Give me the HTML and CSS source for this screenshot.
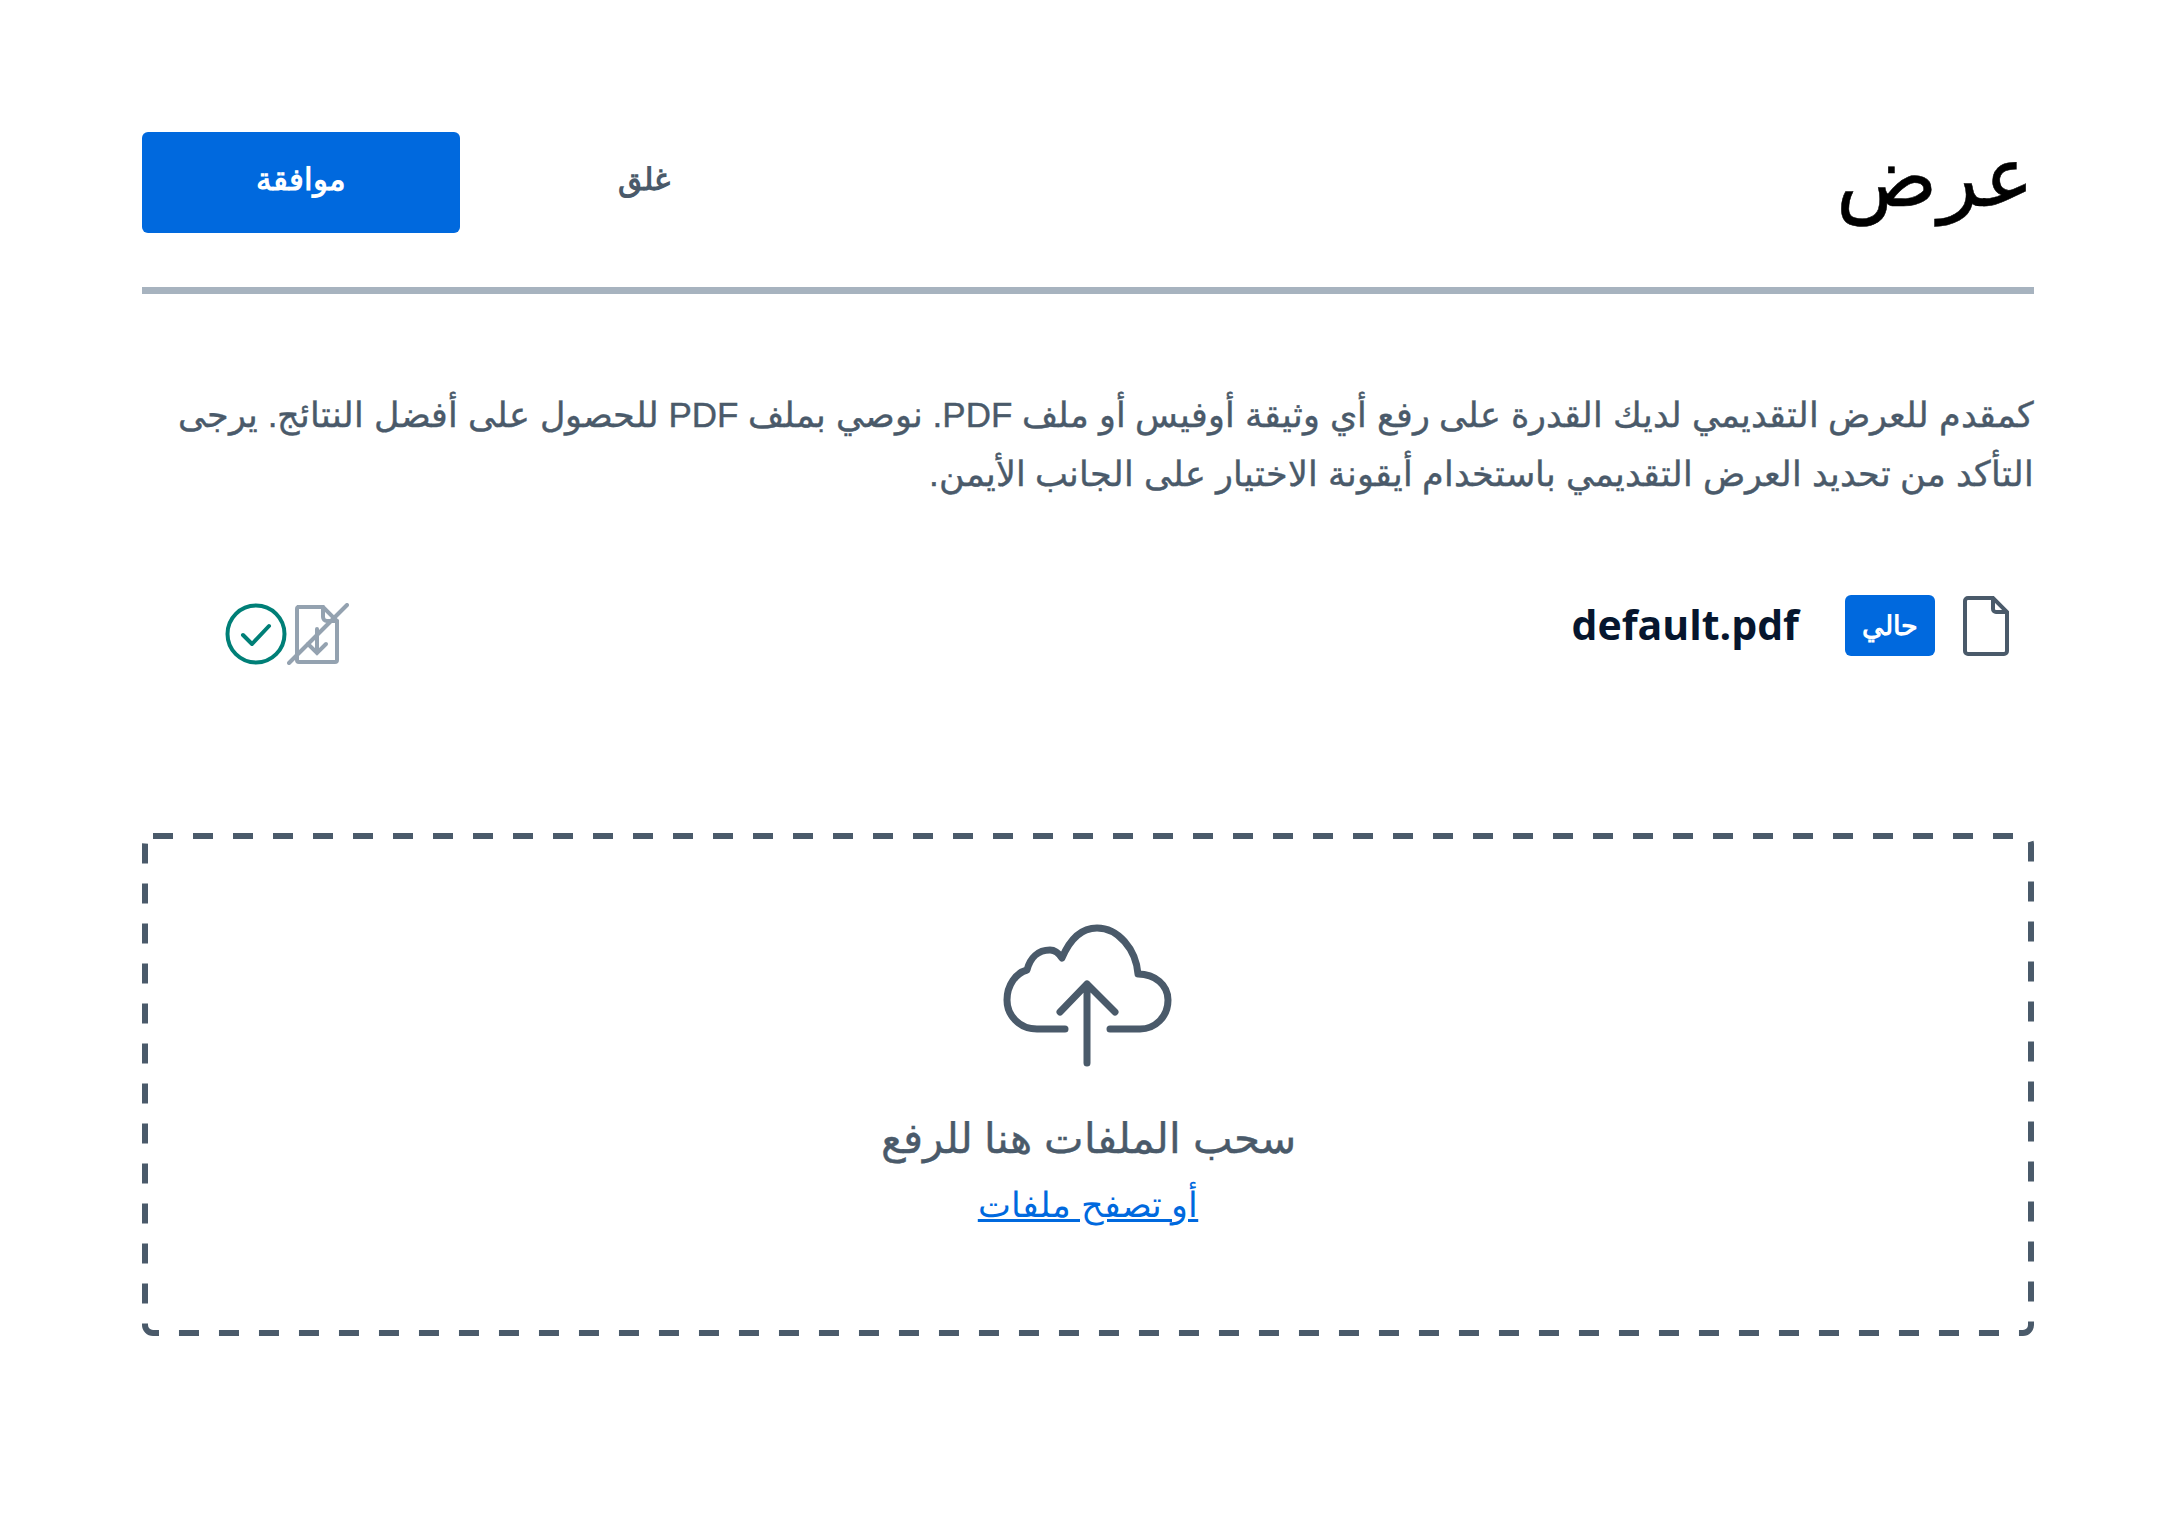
FILE: index.html
```html
<!DOCTYPE html>
<html lang="ar" dir="rtl">
<head>
    <meta charset="UTF-8">
    <title>عرض</title>
    <link rel="stylesheet" href="styles.css">
</head>
<body>
    <main class="modal">
        <header class="modal-header">
            <h1 class="modal-title">عرض</h1>
            <div class="modal-actions">
                <button class="close-button">غلق</button>
                <button class="confirm-button">موافقة</button>
            </div>
        </header>

        <p class="intro">كمقدم للعرض التقديمي لديك القدرة على رفع أي وثيقة أوفيس أو ملف PDF. نوصي بملف PDF للحصول على أفضل النتائج. يرجى التأكد من تحديد العرض التقديمي باستخدام أيقونة الاختيار على الجانب الأيمن.</p>

        <div class="file-row">
            <div class="file-info">
                <svg class="file-icon" viewBox="0 0 48 60">
                    <path d="M4 5a3 3 0 0 1 3-3h25l14 14v39a3 3 0 0 1-3 3H7a3 3 0 0 1-3-3Z"></path>
                    <path d="M32 2v11a3 3 0 0 0 3 3h11"></path>
                </svg>
                <span class="current-badge">حالي</span>
                <span class="file-name" dir="ltr">default.pdf</span>
            </div>
            <div class="file-actions">
                <svg class="download-icon" viewBox="0 0 62 62">
                    <path d="M10 4h26l14 14v39a2 2 0 0 1-2 2H12a2 2 0 0 1-2-2V6a2 2 0 0 1 2-2Z"></path>
                    <path d="M36 4v10a4 4 0 0 0 4 4h10"></path>
                    <path d="M30 26v24M39 41l-9 9-9-9"></path>
                    <path d="M2 60 60 2"></path>
                </svg>
                <svg class="check-icon" viewBox="0 0 62 62">
                    <circle cx="31" cy="31" r="28.500"></circle>
                    <path d="M18 32l9 9 17-18"></path>
                </svg>
            </div>
        </div>

        <section class="dropzone">
            <svg class="dropzone-border">
                <rect x="3" y="3" rx="8" ry="8"></rect>
            </svg>
            <svg class="upload-icon" viewBox="0 0 176 146">
                <path d="M65 106H37C19 106 7 92 7 77C7 62 16 50 27 47C30 35 38 27 50 27C54 27 58 29 62 35C70 16 82 5 97 5C118 5 136 26 138 51C155 51 168 62 168 77C168 94 155 106 140 106H110"></path>
                <path d="M87 140V61M60 89l27-28 28 28"></path>
            </svg>
            <div class="dropzone-text">سحب الملفات هنا للرفع</div>
            <a class="browse-link" href="#">أو تصفح ملفات</a>
        </section>
    </main>
</body>
</html>
```

FILE: styles.css
```css
* {
    margin: 0;
    padding: 0;
    box-sizing: border-box;
}

body {
    background: white;
    color: #4a5a6a;
    font-family: "Liberation Sans", "Noto Sans", sans-serif;
}

.modal {
    padding: 132px 143px 0 142px;
}

.modal-header {
    display: flex;
    align-items: center;
    justify-content: space-between;
    height: 162px;
    padding-bottom: 54px;
    border-bottom: 7px solid #a7b3bf;
}

.modal-title {
    font-size: 84px;
    line-height: 84px;
    padding-bottom: 12px;
    font-weight: normal;
    color: black;
    -webkit-text-stroke: 0.5px black;
}

.modal-actions {
    display: flex;
    align-items: center;
    gap: 158px;
}

.close-button {
    border: none;
    background: none;
    color: #4a5a6a;
    padding-bottom: 6px;
    font: bold 31px "Liberation Sans", "Noto Sans", sans-serif;
}

.confirm-button {
    width: 318px;
    height: 101px;
    padding-bottom: 6px;
    border: none;
    border-radius: 6px;
    background: #0069de;
    color: white;
    font: bold 31px "Liberation Sans", "Noto Sans", sans-serif;
}

.intro {
    margin-top: 91px;
    font-size: 35px;
    line-height: 59px;
    -webkit-text-stroke: 0.4px #4a5a6a;
}

.file-row {
    display: flex;
    align-items: flex-start;
    justify-content: space-between;
    margin-top: 92px;
    padding: 0 25px 0 0;
}

.file-info {
    display: flex;
    align-items: center;
    gap: 26px;
}

.file-icon {
    width: 48px;
    height: 60px;
    fill: none;
    stroke: #4a5a6a;
    stroke-width: 4;
}

.current-badge {
    width: 90px;
    height: 61px;
    margin-left: 20px;
    display: flex;
    align-items: center;
    justify-content: center;
    border-radius: 6px;
    background: #0069de;
    color: white;
    font-size: 27px;
    font-weight: bold;
}

.file-name {
    margin-top: -4px;
    font-family: "Open Sans", sans-serif;
    font-size: 41px;
    font-weight: bold;
    color: #06162e;
}

.file-actions {
    display: flex;
    align-items: center;
    gap: 0;
    margin-top: 8px;
    margin-left: 83px;
}

.download-icon {
    width: 62px;
    height: 62px;
    fill: none;
    stroke: #94a2b0;
    stroke-width: 4;
    stroke-linecap: round;
}

.check-icon {
    width: 62px;
    height: 62px;
    fill: none;
    stroke: #007f77;
    stroke-width: 4;
    stroke-linecap: round;
    stroke-linejoin: round;
}

.dropzone {
    position: relative;
    height: 503px;
    margin-top: 168px;
    padding-top: 90px;
    display: flex;
    flex-direction: column;
    align-items: center;
}

.dropzone-border {
    position: absolute;
    inset: 0;
    width: 100%;
    height: 100%;
}

.dropzone-border rect {
    width: calc(100% - 6px);
    height: calc(100% - 6px);
    fill: none;
    stroke: #4a5a6a;
    stroke-width: 6;
    stroke-dasharray: 20 20;
}

.upload-icon {
    width: 176px;
    height: 146px;
    fill: none;
    stroke: #4a5a6a;
    stroke-width: 7;
    stroke-linecap: round;
    stroke-linejoin: round;
}

.dropzone-text {
    margin-top: 45px;
    font-size: 42px;
    -webkit-text-stroke: 0.4px #4a5a6a;
}

.browse-link {
    margin-top: 22px;
    font-size: 35px;
    color: #0069de;
}
```
